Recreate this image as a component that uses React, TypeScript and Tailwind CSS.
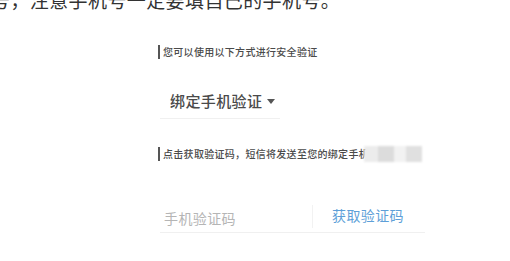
import React from "react";

const cjk = { fontFamily: '"Noto Sans CJK SC", "Noto Sans", sans-serif' };

const Hint: React.FC<{ text: string; children?: React.ReactNode }> = ({ text, children }) => (
  <div className="flex items-center h-[15px]">
    <span className="w-[2px] h-[14px] bg-[#555]" />
    <span className="ml-[3px] text-[10px] leading-none font-medium text-[#4a4a4a] tracking-[0.3px] whitespace-nowrap">{text}</span>
    {children}
  </div>
);

const App: React.FC = () => {
  return (
    <div className="w-[510px] h-[261px] bg-white overflow-hidden" style={cjk}>
      <div className="h-[11px] overflow-hidden">
        <p className="-mt-[11px] -ml-[9px] text-[19px] leading-[22px] text-[#333] tracking-[0.4px] whitespace-nowrap">
          号，注意手机号一定要填自己的手机号。
        </p>
      </div>

      <div className="pl-[158px] pt-[33px] w-[425px] box-content">
        <Hint text="您可以使用以下方式进行安全验证" />

        <div className="mt-[33px] ml-[2px] w-[120px] h-[27px] border-b border-[#f0f0f0] flex items-start">
          <span className="ml-[10px] text-[15px] leading-[18px] font-medium text-[#4a4a4a] tracking-[0.4px]">绑定手机验证</span>
          <span className="ml-[5px] mt-[7px] w-0 h-0 border-l-[4px] border-r-[4px] border-t-[5px] border-l-transparent border-r-transparent border-t-[#555]" />
        </div>

        <div className="mt-[27px]">
          <Hint text="点击获取验证码，短信将发送至您的绑定手机">
            <span className="-ml-[5px] flex h-[16px] w-[58px] bg-[#e4e4e4] blur-[1px]">
              <span className="w-[14px] bg-[#ececec]" />
              <span className="w-[16px] bg-[#dcdcdc]" />
              <span className="w-[12px] bg-[#f2f2f2]" />
              <span className="w-[16px] bg-[#e0e0e0]" />
            </span>
          </Hint>
        </div>

        <div className="mt-[44px] ml-[2px] w-[265px] h-[28px] border-b border-[#f0f0f0] flex items-start">
          <span className="ml-[4px] mt-[4px] w-[148px] text-[14px] leading-[18px] text-[#b5b5b5] tracking-[0.4px]">手机验证码</span>
          <span className="w-px h-[23px] bg-[#f2f2f2]" />
          <span className="ml-[19px] mt-[1px] text-[14px] leading-[18px] text-[#5e9fd8] tracking-[0.4px]">获取验证码</span>
        </div>
      </div>
    </div>
  );
};

export default App;
